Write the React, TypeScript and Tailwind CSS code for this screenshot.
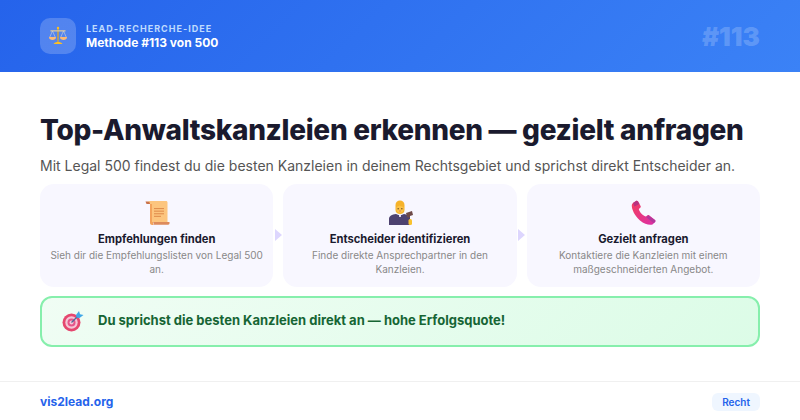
function ScalesIcon() {
  return (
    <svg width="20" height="20" viewBox="0 0 20 20">
      <rect x="9.2" y="1.5" width="1.6" height="15" fill="#c9a24a" />
      <circle cx="10" cy="2" r="1.2" fill="#fbbf24" />
      <rect x="2.5" y="4.2" width="15" height="1.3" fill="#d9c8a0" />
      <path d="M4.5 5 L1.8 11 M4.5 5 L7.2 11 M15.5 5 L12.8 11 M15.5 5 L18.2 11" stroke="#d6d3d1" strokeWidth="0.6" fill="none" />
      <path d="M1 11 H8 C8 13.2 6.4 14 4.5 14 C2.6 14 1 13.2 1 11 Z" fill="#fdba74" />
      <path d="M12 11 H19 C19 13.2 17.4 14 15.5 14 C13.6 14 12 13.2 12 11 Z" fill="#fdba74" />
      <path d="M5.5 18 C6.5 16.4 8 16 10 16 C12 16 13.5 16.4 14.5 18 Z" fill="#fbbf24" />
    </svg>
  );
}

function ScrollIcon() {
  return (
    <svg width="26" height="26" viewBox="0 0 26 26">
      <path d="M1.5 1.5 H6 L6.5 4 H2.5 Z" fill="#c8714a" />
      <path d="M3 1 H22 C23 1 23.5 1.6 23.5 2.5 V22 H6 V4 C6 2.5 5 1 3 1 Z" fill="#fcc57e" />
      <path d="M6 4 V23 C6 24 7 25 8 25 H9 L9 22 H8 V4 Z" fill="#f3a35c" />
      <rect x="10" y="8" width="10" height="1.1" fill="#e08e4e" />
      <rect x="10" y="10.6" width="10" height="1.1" fill="#e08e4e" />
      <rect x="10" y="13.2" width="10" height="1.1" fill="#e08e4e" />
      <rect x="10" y="15.8" width="7" height="1.1" fill="#e08e4e" />
      <path d="M9 22 H25 C25.5 22 25.8 22.6 25.5 23.4 C25.2 24.4 24.5 24.8 23.5 24.8 H9 C9.8 24 9.8 23 9 22 Z" fill="#dd8b5c" />
    </svg>
  );
}

function JudgeIcon() {
  return (
    <svg width="26" height="26" viewBox="0 0 26 26">
      <path d="M8.5 5 C8.5 2 10.5 0.5 13 0.5 C15.5 0.5 17.5 2 17.5 5 V10 C17.5 12.5 15.5 14 13 14 C10.5 14 8.5 12.5 8.5 10 Z" fill="#f6b32a" />
      <path d="M9.5 7 C10.5 6.5 11.5 6 12.5 5.5 C14 6.5 15.5 6.8 16.5 7 V10 C16.5 11.5 15 12.7 13 12.7 C11 12.7 9.5 11.5 9.5 10 Z" fill="#fbc34a" />
      <rect x="10.6" y="8" width="1.1" height="1.4" fill="#6b4a1e" />
      <rect x="14.3" y="8" width="1.1" height="1.4" fill="#6b4a1e" />
      <rect x="12" y="10.6" width="2" height="0.8" fill="#e0764a" />
      <path d="M2 25 V19 C2 16 5 14.5 9 14 L11.5 15 H14.5 L17 14 C20 14.5 22 15.5 23 17 V25 Z" fill="#4d4270" />
      <rect x="12" y="14.5" width="2" height="2.4" fill="#e8e4f4" />
      <path d="M19 13 L25 11 L26 15 L23 16 L23 18 L20 17 Z" fill="#6e4a48" />
      <rect x="21.5" y="19" width="3.5" height="6" rx="1.5" fill="#f9c22e" />
    </svg>
  );
}

function PhoneIcon() {
  return (
    <svg width="26" height="26" viewBox="0 0 26 26">
      <defs>
        <linearGradient id="phone" x1="0" y1="0" x2="1" y2="1">
          <stop offset="0" stopColor="#f43f5e" />
          <stop offset="1" stopColor="#db2fa8" />
        </linearGradient>
      </defs>
      <path d="M3 3 L6 1 C7 0.6 7.6 1 8 1.6 L10.6 6 C11 6.8 10.8 7.5 10 8 L8.8 9 C9.5 12 12.5 15.5 15.8 16.6 L17.4 15.4 C18 15 18.8 15 19.4 15.5 L25 20 C25.6 20.6 25.6 21.4 25 22 L22.5 24.6 C19 25.2 14.5 24.5 10 20.5 C4.5 15.5 1.5 9 1.8 5 C1.9 4.2 2.3 3.5 3 3 Z" fill="url(#phone)" />
      <path d="M3 3 L6 1 C7 0.6 7.6 1 8 1.6 L9.5 4 L4.5 6.5 Z" fill="#b83280" />
      <path d="M18 15.2 L25 20 C25.6 20.6 25.6 21.4 25 22 L23.8 23.2 L16.5 17.5 Z" fill="#b5379b" />
    </svg>
  );
}

function TargetIcon() {
  return (
    <svg width="22" height="22" viewBox="0 0 22 22">
      <circle cx="9.5" cy="12.5" r="9" fill="#e5476f" />
      <circle cx="9.5" cy="12.5" r="6.2" fill="#f6c6d6" />
      <circle cx="9.5" cy="12.5" r="4" fill="#e5558a" />
      <circle cx="9.5" cy="12.5" r="2" fill="#f6c6d6" />
      <path d="M9.5 12.5 L17 5" stroke="#4b6a9b" strokeWidth="1.3" />
      <path d="M14 5 L17 1 L18 4.2 L21.5 5 L17.5 8 L14.5 7.5 Z" fill="#3fa7e8" />
    </svg>
  );
}

const steps = [
  {
    icon: <ScrollIcon />,
    title: "Empfehlungen finden",
    text: "Sieh dir die Empfehlungslisten von Legal 500 an.",
  },
  {
    icon: <JudgeIcon />,
    title: "Entscheider identifizieren",
    text: "Finde direkte Ansprechpartner in den Kanzleien.",
  },
  {
    icon: <PhoneIcon />,
    title: "Gezielt anfragen",
    text: "Kontaktiere die Kanzleien mit einem maßgeschneiderten Angebot.",
  },
];

function Arrow() {
  return (
    <div className="w-[10px] shrink-0 flex items-center justify-center">
      <div className="w-0 h-0 border-y-[6px] border-y-transparent border-l-[7px] border-l-[#ddd6fe]" />
    </div>
  );
}

export default function App() {
  return (
    <div className="w-[800px] h-[420px] flex flex-col bg-white overflow-hidden font-['Inter',sans-serif]">
      {/* Header */}
      <div className="h-[72px] shrink-0 px-10 flex items-center justify-between bg-[linear-gradient(135deg,#2563eb,#3b82f6)]">
        <div className="flex items-center gap-[10px]">
          <div className="w-9 h-9 rounded-[10px] bg-white/20 flex items-center justify-center">
            <ScalesIcon />
          </div>
          <div>
            <div className="text-[9px] leading-[11px] font-bold tracking-[1px] text-[#bfdbfe]">LEAD-RECHERCHE-IDEE</div>
            <div className="text-[12px] leading-[15px] mt-[1px] font-bold text-white">Methode #113 von 500</div>
          </div>
        </div>
        <div className="text-[26px] font-black text-white/20">#113</div>
      </div>

      {/* Content */}
      <div className="flex-1 px-10 pt-[6px] flex flex-col justify-center">
        <h1 className="text-[28px] leading-[34px] tracking-[-0.3px] font-extrabold text-[#1a1a2e]">Top-Anwaltskanzleien erkennen — gezielt anfragen</h1>
        <p className="text-[14px] leading-[21px] mt-[8px] text-[#555]">Mit Legal 500 findest du die besten Kanzleien in deinem Rechtsgebiet und sprichst direkt Entscheider an.</p>
        <div className="flex mt-[8px]">
          {steps.flatMap((step, i) => {
            const card = (
              <div key={step.title} className="flex-1 h-[103px] rounded-[14px] bg-[#f8f7ff] px-[10px] pt-[16px] flex flex-col items-center text-center">
                <div className="h-[26px]">{step.icon}</div>
                <div className="text-[11.2px] leading-[14px] mt-[6px] font-bold text-[#1a1a2e]">{step.title}</div>
                <div className="text-[10px] leading-[14px] mt-[2px] text-[#888]">{step.text}</div>
              </div>
            );
            return i < steps.length - 1 ? [card, <Arrow key={i} />] : [card];
          })}
        </div>
        <div className="mt-[9px] h-[51px] rounded-[12px] border-2 border-[#86efac] bg-[linear-gradient(135deg,#f0fdf4,#dcfce7)] pl-5 flex items-center gap-[14px]">
          <TargetIcon />
          <span className="text-[13px] font-bold text-[#166534]">Du sprichst die besten Kanzleien direkt an — hohe Erfolgsquote!</span>
        </div>
      </div>

      {/* Footer */}
      <div className="h-[39px] shrink-0 px-10 pt-[2px] border-t border-[#f0f0f0] flex items-center justify-between">
        <span className="text-[12px] font-bold text-[#2563eb]">vis2lead.org</span>
        <span className="text-[10px] leading-[14px] font-semibold text-[#2563eb] bg-[#eff6ff] rounded-[6px] px-[10px] py-[2px]">Recht</span>
      </div>
    </div>
  );
}
